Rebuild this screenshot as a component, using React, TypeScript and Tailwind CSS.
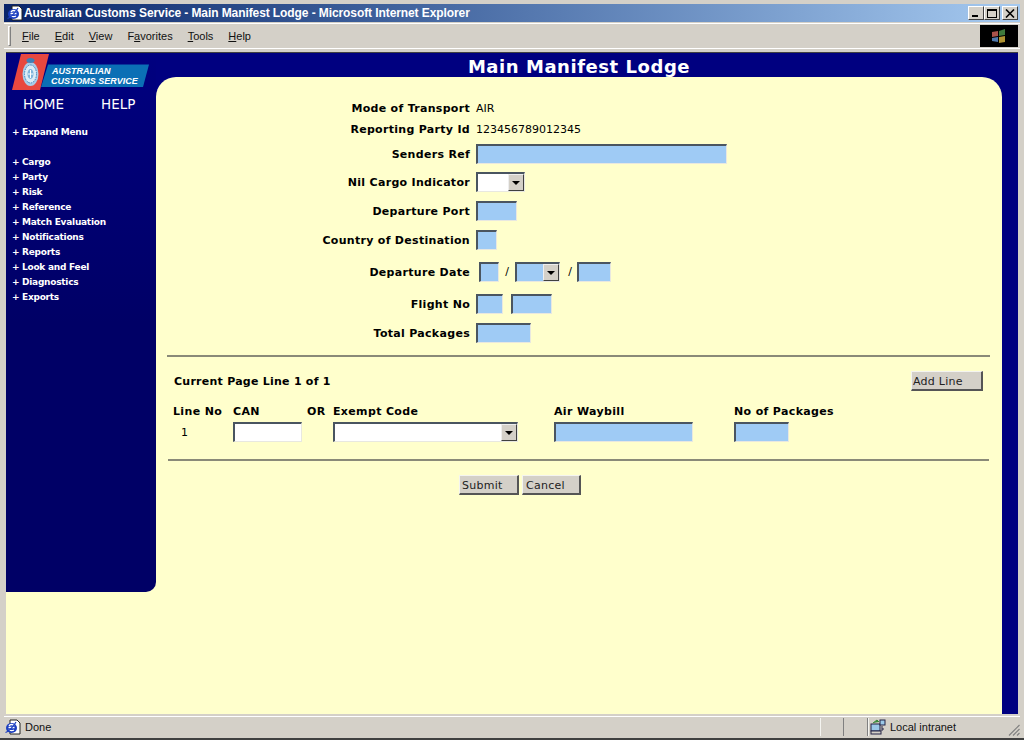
import type { ReactNode } from 'react'

const MENU_ITEMS = [
  'Cargo',
  'Party',
  'Risk',
  'Reference',
  'Match Evaluation',
  'Notifications',
  'Reports',
  'Look and Feel',
  'Diagnostics',
  'Exports',
]

const CHROME_MENU = [
  ['F', 'ile'],
  ['E', 'dit'],
  ['V', 'iew'],
  ['Fa', 'vorites'],
  ['T', 'ools'],
  ['H', 'elp'],
]

function IeIcon() {
  return (
    <svg width="16" height="16" viewBox="0 0 16 16" className="shrink-0">
      <path d="M5 1h7l3 3v11H5z" fill="#fff" stroke="#222" />
      <ellipse cx="6.500" cy="9" rx="5.500" ry="5" fill="#1c3fc0" />
      <path d="M3.500 8.500h6M4 10.500c1 1.500 3.500 1.500 5 .5M4 7c1-2 4-2 5 0" stroke="#fff" strokeWidth="1.300" fill="none" />
      <path d="M0.500 13.500c3-1 8-6 10.500-10.500" stroke="#1c3fc0" strokeWidth="1.200" fill="none" />
    </svg>
  )
}

function Logo() {
  return (
    <svg width="138" height="38" viewBox="0 0 138 38" className="shrink-0">
      <polygon points="36,10.500 137,10.500 131,33 29,33" fill="#0b6fb5" />
      <polygon points="9,0 37,0 28,36 0,36" fill="#e8483f" />
      <ellipse cx="18.500" cy="20" rx="8" ry="12" fill="#a9cde8" />
      <ellipse cx="18.500" cy="20" rx="6" ry="9" fill="#dcecf6" stroke="#3c86c0" strokeDasharray="1.500 1" />
      <ellipse cx="18.500" cy="20" rx="3" ry="5" fill="#7db4dc" />
      <path d="M18.500 16v8M16 20h5" stroke="#ffffff" />
      <ellipse cx="18.500" cy="6.500" rx="4" ry="2.500" fill="#3f7fb5" />
      <text x="40" y="20" fill="#fff" fontFamily="Liberation Sans" fontSize="9" fontWeight="700" fontStyle="italic">
        AUSTRALIAN
      </text>
      <text x="39" y="30" fill="#fff" fontFamily="Liberation Sans" fontSize="9" fontWeight="700" fontStyle="italic">
        CUSTOMS SERVICE
      </text>
    </svg>
  )
}

function Label({ children }: { children: ReactNode }) {
  return (
    <span className="w-[320px] shrink-0 pr-[6px] pt-[2px] text-right font-bold tracking-[0.3px]">{children}</span>
  )
}

function Field({ className }: { className: string }) {
  return (
    <input
      type="text"
      className={`h-[20px] shrink-0 border-t-2 border-l-2 border-t-[#4a5560] border-l-[#4a5560] border-r border-b border-r-[#e8e8e0] border-b-[#e8e8e0] outline-none ${className}`}
    />
  )
}

function Select({ className }: { className: string }) {
  return (
    <div
      className={`flex h-[20px] shrink-0 justify-end border-t-2 border-l-2 border-t-[#4a5560] border-l-[#4a5560] border-r border-b border-r-[#e8e8e0] border-b-[#e8e8e0] ${className}`}
    >
      <div className="flex w-[16px] items-center justify-center border border-t-[#eeeeee] border-l-[#eeeeee] border-r-[#404040] border-b-[#404040] bg-[#d4d0c8]">
        <div className="h-0 w-0 border-x-[4px] border-t-[4px] border-x-transparent border-t-black" />
      </div>
    </div>
  )
}

function FormButton({ className, children }: { className: string; children: ReactNode }) {
  return (
    <button
      type="button"
      className={`h-[20px] shrink-0 border border-t-[#f4f4f0] border-l-[#f4f4f0] border-r-2 border-b-2 border-r-[#555555] border-b-[#555555] bg-[#d4d0c8] pt-[2px] text-left text-[11px] tracking-[0.25px] text-[#222222] ${className}`}
    >
      {children}
    </button>
  )
}

function Rule() {
  return <div className="h-[2px] shrink-0 bg-[#8a8a78]" />
}

export default function App() {
  return (
    <div className="flex h-[740px] w-[1024px] flex-col overflow-hidden border-b-2 border-b-[#404040] bg-[#d4d0c8] font-['Liberation_Sans',sans-serif] text-[12px] text-black">
      {/* title bar */}
      <div className="mx-[4px] mt-[4px] flex h-[18px] shrink-0 items-center justify-between bg-gradient-to-r from-[#0a246a] to-[#a6caf0] pl-[3px] pr-[2px]">
        <div className="flex items-center gap-[1px]">
          <IeIcon />
          <span className="text-[12px] font-bold tracking-[-0.09px] text-white">
            Australian Customs Service - Main Manifest Lodge - Microsoft Internet Explorer
          </span>
        </div>
        <div className="flex">
          {['min', 'max', 'close'].map((kind) => (
            <div
              key={kind}
              className={`flex h-[14px] w-[16px] items-center justify-center border border-t-white border-l-white border-r-[#404040] border-b-[#404040] bg-[#d4d0c8] ${kind === 'close' ? 'ml-[2px]' : ''}`}
            >
              {kind === 'min' && <div className="mt-[6px] mr-[3px] h-[2px] w-[6px] bg-black" />}
              {kind === 'max' && <div className="h-[9px] w-[10px] border border-t-2 border-black" />}
              {kind === 'close' && (
                <svg width="10" height="9" viewBox="0 0 10 9">
                  <path d="M1 0.500l8 8M9 0.500l-8 8" stroke="#000" strokeWidth="1.600" />
                </svg>
              )}
            </div>
          ))}
        </div>
      </div>

      {/* menu bar */}
      <div className="mx-[4px] mt-[1px] flex h-[26px] shrink-0 items-center justify-between border-y border-y-white">
        <div className="flex items-center">
          <div className="mx-[4px] h-[20px] w-[3px] border border-t-white border-l-white border-r-[#808080] border-b-[#808080]" />
          <div className="ml-[7px] flex gap-[15px] text-[11px] text-[#111111]">
            {CHROME_MENU.map(([key, rest]) => (
              <span key={key}>
                {key.length > 1 ? (
                  <>
                    F<span className="underline">a</span>
                  </>
                ) : (
                  <span className="underline">{key}</span>
                )}
                {rest}
              </span>
            ))}
          </div>
        </div>
        <div className="mr-[2px] flex h-[22px] w-[38px] items-center justify-center bg-black">
          <svg width="16" height="16" viewBox="0 0 16 16">
            <path d="M1 4l6-1v5l-6 1z" fill="#a8524a" />
            <path d="M8 3l6-2v6l-6 1z" fill="#3f7a3c" />
            <path d="M1 10l6-1v5l-6-1z" fill="#4f78ac" />
            <path d="M8 9l6-1v6l-6 1z" fill="#b09432" />
          </svg>
        </div>
      </div>

      {/* page */}
      <div className="ml-[6px] mr-[6px] mt-[3px] flex h-[662px] shrink-0 border-t border-t-[#404040] bg-[#ffffcc] font-['DejaVu_Sans',sans-serif] text-[11px]">
        <aside className="flex h-[539px] w-[150px] shrink-0 flex-col rounded-br-[10px] bg-gradient-to-b from-[#000080] via-[#000066] to-[#000066] text-white">
          <div className="pl-[6px] pt-[1px]">
            <Logo />
          </div>
          <div className="mt-[2px] flex text-[13.500px] text-white">
            <span className="ml-[17px] w-[78px]">HOME</span>
            <span>HELP</span>
          </div>
          <div className="mt-[12px] flex pl-[6px] text-[9px] font-bold tracking-[-0.25px]">
            <span className="w-[10px]">+</span>
            <span>Expand Menu</span>
          </div>
          <div className="mt-[17px] flex flex-col gap-[3px] pl-[6px] text-[9px] font-bold tracking-[-0.25px]">
            {MENU_ITEMS.map((item) => (
              <div key={item} className="flex h-[12px] items-center">
                <span className="w-[10px]">+</span>
                <span>{item}</span>
              </div>
            ))}
          </div>
        </aside>

        <main className="flex min-w-0 flex-1 flex-col bg-[#000080]">
          <h1 className="h-[24px] shrink-0 pt-[3px] text-center text-[18px] leading-[21px] font-bold tracking-[0.55px] text-white">
            Main Manifest Lodge
          </h1>
          <div className="flex flex-1 flex-col rounded-t-[20px] bg-[#ffffcc]">
            <div className="mt-[21px] flex h-[21px] shrink-0 items-center">
              <Label>Mode of Transport</Label>
              <span className="pt-[2px]">AIR</span>
            </div>
            <div className="flex h-[21px] shrink-0 items-center">
              <Label>Reporting Party Id</Label>
              <span className="pt-[2px]">123456789012345</span>
            </div>
            <div className="mt-[4px] flex h-[20px] shrink-0 items-center">
              <Label>Senders Ref</Label>
              <Field className="w-[251px] bg-[#9fcbf5]" />
            </div>
            <div className="mt-[8px] flex h-[20px] shrink-0 items-center">
              <Label>Nil Cargo Indicator</Label>
              <Select className="w-[49px] bg-white" />
            </div>
            <div className="mt-[9px] flex h-[20px] shrink-0 items-center">
              <Label>Departure Port</Label>
              <Field className="w-[41px] bg-[#9fcbf5]" />
            </div>
            <div className="mt-[9px] flex h-[20px] shrink-0 items-center">
              <Label>Country of Destination</Label>
              <Field className="w-[21px] bg-[#9fcbf5]" />
            </div>
            <div className="mt-[12px] flex h-[20px] shrink-0 items-center">
              <Label>Departure Date</Label>
              <Field className="ml-[3px] w-[20px] bg-[#9fcbf5]" />
              <span className="w-[16px] text-center">/</span>
              <Select className="w-[45px] bg-[#9fcbf5]" />
              <span className="w-[17px] pl-[3px] text-center">/</span>
              <Field className="w-[34px] bg-[#9fcbf5]" />
            </div>
            <div className="mt-[12px] flex h-[20px] shrink-0 items-center">
              <Label>Flight No</Label>
              <Field className="w-[27px] bg-[#9fcbf5]" />
              <Field className="ml-[8px] w-[41px] bg-[#9fcbf5]" />
            </div>
            <div className="mt-[9px] flex h-[20px] shrink-0 items-center">
              <Label>Total Packages</Label>
              <Field className="w-[55px] bg-[#9fcbf5]" />
            </div>

            <div className="mt-[12px] ml-[11px] mr-[12px]">
              <Rule />
            </div>

            <div className="mt-[14px] flex h-[20px] shrink-0 items-center justify-between pl-[18px] pr-[19px]">
              <span className="pt-[2px] font-bold tracking-[0.25px]">Current Page Line 1 of 1</span>
              <FormButton className="w-[72px] pl-[1px]">Add Line</FormButton>
            </div>

            <div className="mt-[13px] flex h-[14px] shrink-0 items-center pt-[2px] font-bold tracking-[0.35px]">
              <span className="ml-[17px] w-[60px]">Line No</span>
              <span className="w-[74px]">CAN</span>
              <span className="w-[26px]">OR</span>
              <span className="w-[221px]">Exempt Code</span>
              <span className="w-[180px]">Air Waybill</span>
              <span>No of Packages</span>
            </div>
            <div className="mt-[4px] flex h-[20px] shrink-0 items-center">
              <span className="ml-[25px] w-[52px] pt-[3px]">1</span>
              <Field className="w-[69px] bg-white" />
              <Select className="ml-[31px] w-[185px] bg-white" />
              <Field className="ml-[36px] w-[139px] bg-[#9fcbf5]" />
              <Field className="ml-[41px] w-[55px] bg-[#9fcbf5]" />
            </div>

            <div className="mt-[17px] ml-[12px] mr-[13px]">
              <Rule />
            </div>

            <div className="mt-[14px] flex h-[20px] shrink-0 pl-[303px]">
              <FormButton className="w-[60px] pl-[2px]">Submit</FormButton>
              <FormButton className="ml-[3px] w-[59px] pl-[3px]">Cancel</FormButton>
            </div>
          </div>
        </main>

        <div className="w-[16px] shrink-0 bg-[#000080]" />
      </div>

      {/* status bar */}
      <div className="mx-[4px] mt-[2px] flex h-[20px] shrink-0 items-center border-t border-t-white pt-[1px] text-[11px] text-[#111111]">
        <div className="flex flex-1 items-center gap-[4px] pl-[1px]">
          <IeIcon />
          <span>Done</span>
        </div>
        <div className="h-[18px] w-[24px] border-l border-l-[#f4f4f0] border-r border-r-[#808080]" />
        <div className="h-[18px] w-[24px] border-r border-r-[#808080]" />
        <div className="flex h-[18px] w-[152px] items-center gap-[4px] border-l border-l-[#f4f4f0] pl-[1px]">
          <svg width="16" height="16" viewBox="0 0 16 16" className="shrink-0">
            <rect x="1" y="5" width="9" height="7" fill="#9ac8e8" stroke="#224" />
            <rect x="1" y="12" width="10" height="3" fill="#d4d0c8" stroke="#224" />
            <rect x="10" y="1" width="5" height="5" fill="#9ac8e8" stroke="#224" />
            <path d="M3 4l4-3 2 2" fill="#3c8a3c" stroke="#3c8a3c" />
            <path d="M12 7v5M12 10h2" stroke="#224" />
          </svg>
          <span className="flex-1">Local intranet</span>
          <svg width="12" height="12" viewBox="0 0 12 12" className="shrink-0 self-end">
            <path d="M11.500 1L1 11.500M11.500 5L5 11.500M11.500 9L9 11.500" stroke="#808080" strokeWidth="1.200" />
          </svg>
        </div>
      </div>
    </div>
  )
}
